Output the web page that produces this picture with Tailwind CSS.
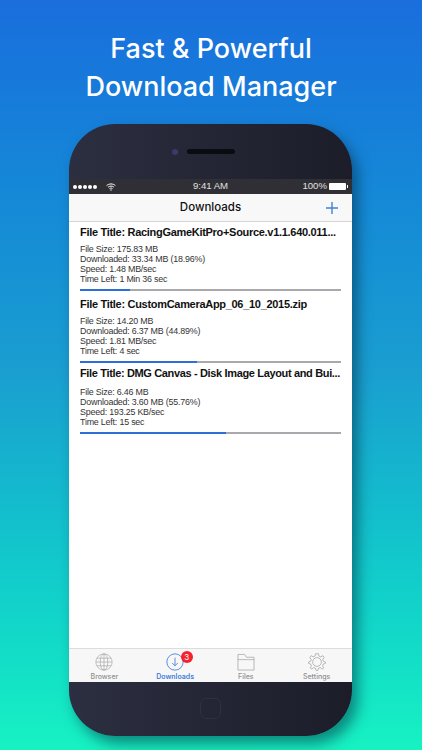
<!DOCTYPE html>
<html><head><meta charset="utf-8">
<script src="https://cdn.jsdelivr.net/npm/@tailwindcss/browser@4"></script>
</head>
<body class="m-0">
<div class="w-[422px] h-[750px] overflow-hidden flex flex-col items-center bg-gradient-to-b from-[#1a6edd] via-[#1a9fd0] to-[#17f2c2] font-['Inter',sans-serif]">
  <div class="pt-[30px] h-[124px] text-center text-white text-[27px] leading-[38px] font-medium">
    <div>Fast &amp; Powerful</div>
    <div>Download Manager</div>
  </div>
  <div class="w-[283px] h-[612px] mr-[1px] shrink-0 rounded-[46px] bg-gradient-to-r from-[#2c2f41] to-[#1c1d29] overflow-hidden flex flex-col shadow-[6px_8px_14px_rgba(0,40,60,0.5)]">
    <div class="h-[55px] shrink-0 flex items-start justify-center pt-[25px] gap-[9px] pr-[14px]">
      <div class="w-[6px] h-[6px] rounded-full bg-[#3b3a6b]"></div>
      <div class="w-[48px] h-[5px] rounded-full bg-[#0b0b12]"></div>
    </div>
    <div class="h-[15px] shrink-0 bg-[#302f35] relative flex items-center justify-between px-[4px] text-white/85 text-[9.6px]">
      <div class="flex items-center gap-[1px]">
        <span class="w-[4px] h-[4px] rounded-full bg-white"></span><span class="w-[4px] h-[4px] rounded-full bg-white"></span><span class="w-[4px] h-[4px] rounded-full bg-white"></span><span class="w-[4px] h-[4px] rounded-full bg-white"></span><span class="w-[4px] h-[4px] rounded-full bg-white"></span>
        <svg class="ml-[8px]" width="10" height="8" viewBox="0 0 10 8" fill="none" stroke="#fff" stroke-width="1"><path d="M0.6 2.6C3 .4 7 .4 9.4 2.6M2.1 4.1C3.7 2.8 6.3 2.8 7.9 4.1M3.5 5.6C4.4 4.9 5.6 4.9 6.5 5.6"/><circle cx="5" cy="7" r=".7" fill="#fff" stroke="none"/></svg>
      </div>
      <span class="absolute left-0 right-0 text-center font-['Liberation_Sans',sans-serif]">9:41 AM</span>
      <div class="flex items-center gap-[2px] font-['Liberation_Sans',sans-serif]">
        <span>100%</span>
        <span class="w-[17px] h-[7px] bg-white rounded-[1px]"></span><span class="w-[1px] h-[3px] bg-white ml-[-1px]"></span>
      </div>
    </div>
    <div class="h-[28px] shrink-0 bg-[#f8f8f8] border-b border-[#d4d4d4] flex items-center justify-center relative text-[11.5px] font-medium text-[#111] pt-[1px]">
      Downloads
      <svg class="absolute right-[14px] top-[8px]" width="12" height="12" viewBox="0 0 12 12" stroke="#3f7fdc" stroke-width="1.4"><path d="M6 0V12M0 6H12"/></svg>
    </div>
    <div class="flex-1 bg-white px-[11px] text-[8.9px] tracking-[-0.2px] leading-[10px] text-[#333] font-['Liberation_Sans',sans-serif]">
      <div class="h-[72px] pt-[4px] flex flex-col">
        <div class="text-[11px] tracking-[-0.3px] leading-[13px] font-bold text-[#111] whitespace-nowrap">File Title: RacingGameKitPro+Source.v1.1.640.011...</div>
        <div class="mt-[5px]">File Size: 175.83 MB</div><div>Downloaded: 33.34 MB (18.96%)</div><div>Speed: 1.48 MB/sec</div><div>Time Left: 1 Min 36 sec</div>
        <div class="mt-[5px] h-[2px] bg-[#a9a9ad] w-[261px]"><div class="h-full bg-[#2d6fd6] w-[19%]"></div></div>
      </div>
      <div class="h-[72px] pt-[4px] flex flex-col">
        <div class="text-[11px] tracking-[-0.3px] leading-[13px] font-bold text-[#111] whitespace-nowrap">File Title: CustomCameraApp_06_10_2015.zip</div>
        <div class="mt-[5px]">File Size: 14.20 MB</div><div>Downloaded: 6.37 MB (44.89%)</div><div>Speed: 1.81 MB/sec</div><div>Time Left: 4 sec</div>
        <div class="mt-[5px] h-[2px] bg-[#a9a9ad] w-[261px]"><div class="h-full bg-[#2d6fd6] w-[45%]"></div></div>
      </div>
      <div class="h-[72px] pt-[1px] flex flex-col">
        <div class="text-[11px] tracking-[-0.35px] leading-[13px] font-bold text-[#111] whitespace-nowrap">File Title: DMG Canvas - Disk Image Layout and Bui...</div>
        <div class="mt-[7px]">File Size: 6.46 MB</div><div>Downloaded: 3.60 MB (55.76%)</div><div>Speed: 193.25 KB/sec</div><div>Time Left: 15 sec</div>
        <div class="mt-[5px] h-[2px] bg-[#a9a9ad] w-[261px]"><div class="h-full bg-[#2d6fd6] w-[55.76%]"></div></div>
      </div>
    </div>
    <div class="h-[34px] shrink-0 bg-[#f7f7f7] border-t border-[#dcdcdc] grid grid-cols-4 text-[7px] leading-[8px] text-[#8f8f8f] font-medium">
      <div class="flex flex-col items-center pt-[4px]">
        <svg width="18" height="18" viewBox="0 0 19 19" fill="none" stroke="#9a9a9a" stroke-width=".6"><circle cx="9.5" cy="9.5" r="8.6"/><ellipse cx="9.5" cy="9.5" rx="4" ry="8.6"/><path d="M9.5 1V18M1 9.5H18M2 5.5H17M2 13.5H17"/></svg>
        <span class="mt-[2px]">Browser</span>
      </div>
      <div class="flex flex-col items-center pt-[4px] text-[#3f7fdc] font-semibold relative">
        <svg width="18" height="18" viewBox="0 0 19 19" fill="none" stroke="#3f7fdc" stroke-width=".9"><circle cx="9.5" cy="9.5" r="8.6"/><path d="M9.5 5V13.5M6.5 10.5L9.5 13.5L12.5 10.5"/></svg>
        <span class="mt-[2px]">Downloads</span>
        <span class="absolute left-[41px] top-[2px] w-[12px] h-[12px] rounded-full bg-[#f5222d] text-white text-[8px] leading-[12px] text-center font-normal">3</span>
      </div>
      <div class="flex flex-col items-center pt-[4px]">
        <svg width="18" height="18" viewBox="0 0 19 19" fill="none" stroke="#9a9a9a" stroke-width=".7"><path d="M1 1.5H8L10 4.5H18V18H1ZM1 7H18"/></svg>
        <span class="mt-[2px]">Files</span>
      </div>
      <div class="flex flex-col items-center pt-[4px]">
        <svg width="18" height="18" viewBox="0 0 19 19" fill="none" stroke="#9a9a9a" stroke-width=".7"><circle cx="9.5" cy="9.5" r="4.6"/><path d="M8 .8H11L11.5 3.2L13.6 4.1L15.7 2.8L17.2 5L15.5 6.6L16.1 8.6L18.4 9.5V11L16.1 11.7L15.4 13.6L16.7 15.7L14.7 17L13.2 15.4L11.2 16L10.5 18.3H8.5L7.8 16L5.8 15.4L4.3 17L2.3 15.7L3.6 13.6L2.9 11.7L.6 11V9.5L2.9 8.6L3.5 6.6L1.8 5L3.3 2.8L5.4 4.1L7.5 3.2Z"/></svg>
        <span class="mt-[2px]">Settings</span>
      </div>
    </div>
    <div class="h-[54px] shrink-0 flex items-center justify-center pb-[2px]">
      <div class="w-[21px] h-[21px] rounded-[6px] border-[1.5px] border-[#2f3040]"></div>
    </div>
  </div>
</div>
</body></html>
